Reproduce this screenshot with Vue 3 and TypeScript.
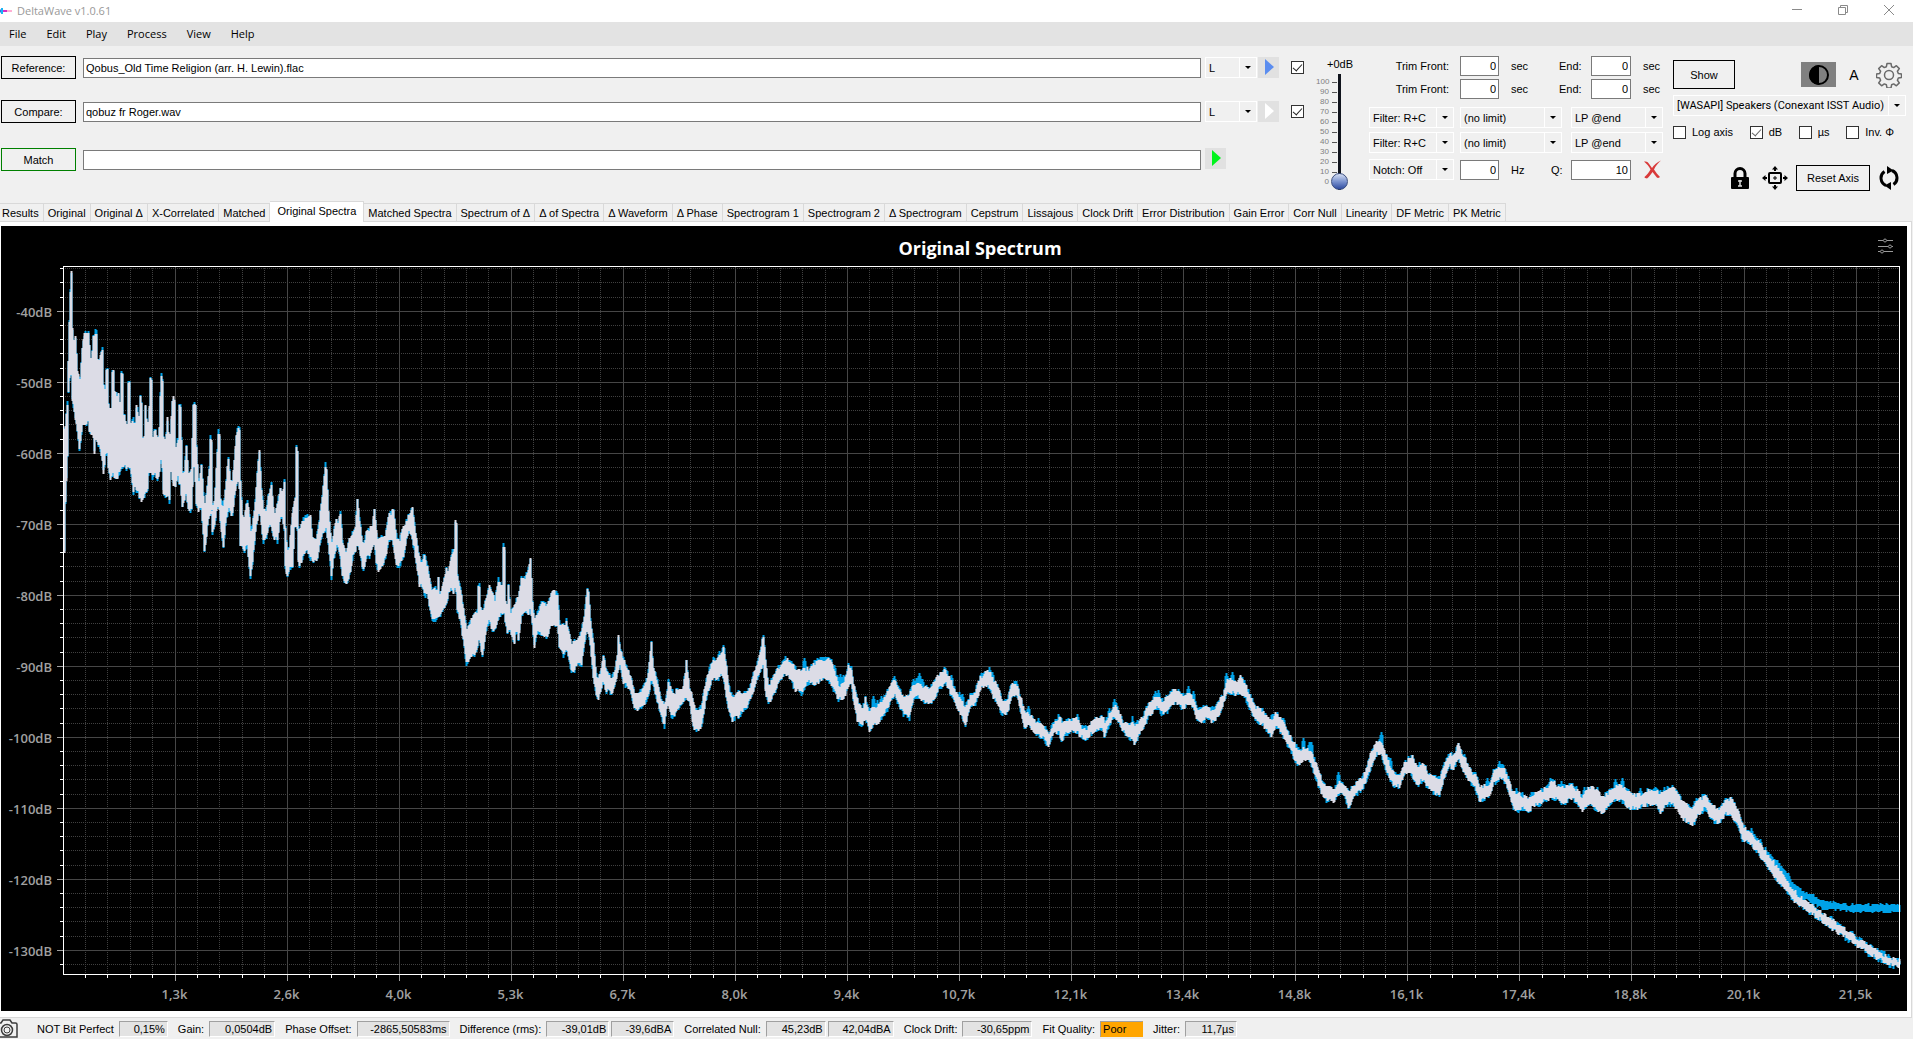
<script setup lang="ts">
import { ref } from 'vue'

const menus = ['File', 'Edit', 'Play', 'Process', 'View', 'Help']

const tabs = [
  'Results', 'Original', 'Original Δ', 'X-Correlated', 'Matched', 'Original Spectra',
  'Matched Spectra', 'Spectrum of Δ', 'Δ of Spectra', 'Δ Waveform', 'Δ Phase',
  'Spectrogram 1', 'Spectrogram 2', 'Δ Spectrogram', 'Cepstrum', 'Lissajous',
  'Clock Drift', 'Error Distribution', 'Gain Error', 'Corr Null', 'Linearity',
  'DF Metric', 'PK Metric',
]
const activeTab = ref('Original Spectra')

const volume = ref(0)
const volumeMarks = [100, 90, 80, 70, 60, 50, 40, 30, 20, 10, 0]

interface Reading {
  label: string
  values: { text: string; width: number; warn?: boolean }[]
}
const readings: Reading[] = [
  { label: 'NOT Bit Perfect', values: [{ text: '0,15%', width: 49 }] },
  { label: 'Gain:', values: [{ text: '0,0504dB', width: 66 }] },
  { label: 'Phase Offset:', values: [{ text: '-2865,50583ms', width: 93 }] },
  { label: 'Difference (rms):', values: [{ text: '-39,01dB', width: 63 }, { text: '-39,6dBA', width: 63 }] },
  { label: 'Correlated Null:', values: [{ text: '45,23dB', width: 60 }, { text: '42,04dBA', width: 66 }] },
  { label: 'Clock Drift:', values: [{ text: '-30,65ppm', width: 70 }] },
  { label: 'Fit Quality:', values: [{ text: 'Poor', width: 43, warn: true }] },
  { label: 'Jitter:', values: [{ text: '11,7µs', width: 52 }] },
]

/* ---- chart geometry ---- */
const plot = { left: 63, top: 266, right: 1899, bottom: 974 }
const xLabels = [
  '1,3k', '2,6k', '4,0k', '5,3k', '6,7k', '8,0k', '9,4k', '10,7k',
  '12,1k', '13,4k', '14,8k', '16,1k', '17,4k', '18,8k', '20,1k', '21,5k',
]
const X_STEP = 112.07
const Y_STEP = 71
const xAt = (i: number) => Math.floor(plot.left + X_STEP * i) + 0.5
const yAt = (i: number) => Math.floor(311.2 + Y_STEP * i) + 0.5

const xMajor = xLabels.map((text, i) => ({ text, x: xAt(i + 1) }))
const yMajor = Array.from({ length: 10 }, (_, i) => ({ text: `-${40 + i * 10}dB`, y: yAt(i) }))
const xMinor: number[] = []
for (let i = 1; i < 82; i++) if (i % 5) xMinor.push(xAt(i / 5))
const yMinor: number[] = []
for (let i = -3; i < 47; i++) if (((i % 5) + 5) % 5) yMinor.push(yAt(i / 5))

/* Spectrum envelope: position, upper edge, lower edge */
const envelope = [
  64,430,552, 65,428,503, 67,405,455, 68,360,392, 69,323,380, 70,290,372, 71,273,375, 72,330,400,
  73,345,405, 75,337,418, 77,372,431, 79,380,451, 80,378,442, 82,347,421, 84,334,424, 86,333,425,
  88,333,415, 89,347,432, 91,365,434, 93,336,436, 94,402,452, 95,332,438, 96,332,438, 98,385,447,
  99,362,442, 101,352,455, 102,350,460, 103,385,472, 105,392,455, 106,369,453, 107,369,452,
  108,405,466, 110,416,480, 111,410,477, 112,370,475, 113,372,475, 114,393,476, 116,396,480,
  118,395,473, 120,408,470, 121,371,468, 122,372,467, 123,435,466, 124,413,462, 126,428,469,
  127,425,468, 128,381,466, 129,382,466, 130,425,466, 133,421,494, 134,440,480, 136,407,490,
  137,410,490, 138,438,491, 140,397,500, 141,402,500, 142,440,499, 144,438,495, 145,407,493,
  147,435,488, 149,408,458, 150,378,471, 151,382,473, 152,440,476, 155,428,472, 157,445,480,
  159,428,470, 160,395,462, 161,374,455, 162,380,470, 163,435,492, 165,446,497, 167,419,492,
  169,448,502, 170,436,468, 172,400,480, 173,398,485, 174,402,485, 175,455,485, 177,441,475,
  178,440,478, 179,403,483, 180,405,484, 182,475,505, 184,472,498, 186,445,492, 188,476,511,
  191,471,508, 193,406,462, 194,403,468, 195,405,480, 196,446,504, 198,482,510, 200,475,507,
  201,464,505, 204,510,551, 207,488,527, 209,467,514, 210,439,512, 211,441,512, 212,510,533,
  214,502,527, 216,470,510, 218,433,505, 219,436,508, 220,500,523, 223,508,548, 225,490,525,
  228,458,507, 230,482,512, 232,484,515, 234,460,495, 236,436,484, 238,426,478, 239,428,490,
  240,480,545, 242,516,546, 244,518,550, 247,501,545, 249,515,568, 250,530,577, 252,527,562,
  255,503,532, 257,472,521, 259,452,505, 261,488,523, 263,510,540, 266,511,537, 268,497,525,
  271,484,528, 274,520,538, 277,505,540, 280,488,515, 282,498,518, 284,481,530, 285,528,568,
  287,552,578, 289,548,568, 292,515,568, 294,502,528, 295,500,525, 296,448,525, 297,449,530,
  298,528,562, 299,535,568, 302,520,557, 306,518,548, 310,516,558, 312,538,560, 316,541,562,
  318,528,552, 322,497,532, 325,466,528, 326,470,530, 328,512,545, 330,535,563, 331,545,577,
  333,535,558, 336,520,545, 338,525,548, 340,512,558, 342,541,575, 346,555,585, 349,540,575,
  353,532,552, 355,528,552, 357,500,538, 360,528,555, 363,548,570, 366,533,556, 369,529,556,
  372,527,547, 374,509,543, 376,532,562, 378,542,570, 381,537,565, 385,538,558, 388,517,541,
  391,513,538, 393,510,545, 396,537,563, 399,543,565, 403,527,555, 406,522,538, 409,515,530,
  412,507,540, 414,525,548, 417,545,570, 419,558,585, 422,562,585, 424,555,595, 427,568,592,
  430,585,612, 432,592,620, 434,588,618, 437,592,618, 438,578,618, 439,592,616, 441,592,612,
  446,570,605, 448,572,590, 452,553,588, 453,552,594, 454,550,590, 455,522,585, 456,524,590,
  457,575,610, 460,588,620, 463,610,640, 466,630,664, 470,622,655, 474,615,655, 477,612,645,
  478,584,640, 479,586,638, 480,606,645, 482,615,657, 485,602,633, 489,587,618, 492,595,631,
  495,600,630, 498,580,617, 502,590,613, 503,547,610, 504,549,612, 505,602,624, 507,610,632,
  508,585,626, 510,612,632, 514,607,645, 516,600,623, 518,598,640, 521,578,613, 525,578,610,
  528,570,613, 530,560,610, 532,600,623, 534,623,646, 537,613,630, 542,603,634, 547,606,635,
  550,597,626, 553,592,623, 557,594,624, 559,623,647, 563,627,655, 566,622,646, 569,633,660,
  571,646,670, 574,640,670, 577,643,663, 581,633,663, 584,618,643, 587,588,627, 588,594,632,
  590,620,646, 593,643,676, 596,676,695, 598,680,698, 601,670,686, 603,656,680, 606,671,692,
  608,673,687, 611,680,696, 615,670,683, 617,655,672, 618,635,668, 620,650,666, 623,660,683,
  628,672,687, 631,680,693, 634,693,708, 638,695,710, 642,689,706, 647,680,697, 649,663,691,
  651,644,675, 653,667,685, 657,682,701, 660,697,713, 664,707,726, 666,697,707, 668,682,702,
  671,690,716, 674,696,715, 677,689,707, 680,693,706, 683,688,700, 685,672,698, 686,660,696,
  687,672,698, 689,688,700, 692,697,720, 694,707,728, 698,712,730, 701,707,726, 704,690,707,
  707,677,693, 711,663,680, 713,659,676, 716,662,678, 719,655,676, 721,653,673, 723,648,677,
  726,667,697, 728,687,710, 732,697,720, 735,697,715, 738,692,717, 742,695,710, 746,693,707,
  749,690,700, 753,675,690, 757,663,677, 760,653,670, 763,636,663, 765,660,690, 768,687,703,
  772,680,697, 776,670,687, 780,667,678, 785,659,673, 790,662,677, 795,668,690, 798,670,687,
  801,673,693, 804,668,687, 808,670,680, 812,666,683, 816,661,684, 820,661,680, 824,660,676,
  829,659,680, 833,667,688, 838,686,699, 843,685,699, 848,667,685, 851,668,682, 853,684,697,
  857,700,721, 862,710,725, 865,699,716, 869,713,730, 873,706,724, 878,706,722, 882,700,716,
  887,693,708, 891,685,698, 894,678,693, 898,687,703, 903,699,713, 909,695,717, 913,685,697,
  917,684,695, 919,685,697, 925,688,702, 930,690,702, 934,682,698, 938,675,688, 945,670,683,
  950,680,692, 955,692,702, 960,700,713, 965,709,723, 970,695,705, 975,692,703, 980,677,688,
  985,673,684, 989,672,687, 993,680,697, 997,686,703, 1002,702,713, 1007,702,712, 1011,685,697,
  1016,684,694, 1020,697,708, 1024,712,727, 1028,712,723, 1033,720,730, 1038,725,735,
  1043,727,737, 1048,735,745, 1053,723,733, 1059,717,731, 1061,722,741, 1065,724,733,
  1072,719,730, 1077,720,731, 1080,727,736, 1086,729,739, 1092,722,732, 1097,718,728,
  1103,716,730, 1104,723,736, 1109,715,724, 1114,706,715, 1119,713,722, 1123,723,731,
  1128,726,736, 1132,720,738, 1134,726,743, 1138,722,736, 1142,718,730, 1147,707,718,
  1152,700,712, 1157,697,706, 1162,702,713, 1167,698,712, 1172,690,702, 1178,691,703,
  1183,697,708, 1188,693,702, 1193,698,706, 1197,709,720, 1200,711,722, 1205,706,718,
  1210,709,721, 1215,707,719, 1219,701,713, 1223,694,703, 1226,682,693, 1232,680,692,
  1236,683,694, 1240,677,693, 1245,685,696, 1249,695,707, 1255,707,719, 1262,711,724,
  1268,718,731, 1271,719,736, 1275,714,725, 1282,720,733, 1287,730,743, 1292,742,753,
  1297,748,764, 1300,752,762, 1303,748,759, 1309,750,760, 1313,758,770, 1318,770,784,
  1323,785,797, 1328,788,800, 1333,790,801, 1338,783,792, 1343,784,793, 1348,793,807,
  1353,786,796, 1360,780,790, 1365,773,783, 1370,754,768, 1376,743,753, 1381,742,752,
  1383,750,762, 1388,762,775, 1393,773,784, 1399,777,787, 1404,764,774, 1408,760,770,
  1412,757,776, 1417,770,784, 1423,763,778, 1428,775,788, 1433,777,792, 1439,780,794,
  1443,767,779, 1449,755,765, 1453,757,768, 1458,744,758, 1462,755,768, 1467,764,777,
  1472,774,784, 1475,772,787, 1479,788,801, 1485,786,796, 1489,785,796, 1493,772,783,
  1499,768,778, 1503,767,780, 1508,780,790, 1512,792,805, 1516,793,810, 1522,796,807,
  1528,799,811, 1533,795,805, 1542,790,802, 1547,788,799, 1551,780,796, 1557,787,799,
  1562,788,804, 1570,785,797, 1577,790,802, 1582,797,810, 1589,788,803, 1597,790,810,
  1602,799,814, 1607,794,806, 1615,787,799, 1622,786,800, 1628,793,808, 1635,795,808,
  1642,795,806, 1648,791,804, 1655,790,803, 1660,793,813, 1665,790,803, 1672,787,803,
  1678,795,810, 1683,803,819, 1692,809,824, 1697,799,815, 1705,797,807, 1710,805,818,
  1718,810,822, 1725,801,814, 1731,799,815, 1737,810,823, 1742,825,839, 1747,832,842,
  1752,834,846, 1760,845,856, 1768,856,867, 1777,868,880, 1785,879,888, 1793,891,900,
  1803,900,907, 1813,907,914, 1827,917,925, 1840,927,934, 1855,937,944, 1867,945,952,
  1880,953,960, 1892,959,965, 1899,960,966,
]

/* Places where the reference signal rises above the compared one: centre, upper edge */
const peaks: Record<number, number> = {
  339: 518, 719: 651, 723: 645, 738: 690, 768: 684, 773: 676, 795: 667, 804: 658, 834: 665,
  837: 675, 840: 674, 843: 675, 846: 674, 873: 696, 877: 700, 881: 696, 885: 696, 913: 679,
  916: 678, 919: 673, 922: 679, 951: 675, 959: 692, 962: 694, 989: 667, 992: 672, 1016: 681,
  1028: 706, 1038: 718, 1058: 716, 1077: 714, 1109: 708, 1114: 699, 1116: 703, 1155: 691,
  1158: 690, 1188: 686, 1193: 691, 1226: 673, 1228: 678, 1232: 672, 1303: 738, 1309: 742,
  1311: 742, 1338: 772, 1381: 732, 1388: 757, 1390: 758, 1419: 762, 1451: 752, 1464: 754,
  1487: 778, 1499: 761, 1505: 769, 1516: 788, 1531: 792, 1535: 792, 1542: 789, 1561: 781,
  1569: 783, 1572: 783, 1584: 787, 1615: 779, 1622: 778, 1640: 788, 1650: 789, 1655: 787,
  1664: 787, 1672: 786, 1706: 795, 1725: 798, 1731: 797, 1751: 828, 1760: 839, 1768: 852,
  1777: 860, 1788: 873,
}

/* Noise floor the reference settles on above 20 kHz */
const floorTail = [
  1768,854,862, 1777,862,872, 1785,873,882, 1793,885,892, 1800,889,896, 1803,892,898,
  1813,896,903, 1822,902,908, 1837,904,909, 1855,906,911, 1870,905,911, 1899,905,911,
]

function noise(seed: number) {
  let s = seed
  return () => {
    s = (s * 1664525 + 1013904223) >>> 0
    return s / 4294967296
  }
}

function columns(data: number[], jitter: number, grow: number, seed: number, raised: Record<number, number> = {}) {
  const rand = noise(seed)
  let d = ''
  let k = 0
  const last = data[data.length - 3]
  for (let x = data[0]; x <= last; x++) {
    while (k < data.length - 6 && x >= data[k + 3]) k += 3
    const t = Math.min(1, (x - data[k]) / (data[k + 3] - data[k]))
    let hi = data[k + 1] + (data[k + 4] - data[k + 1]) * t
    let lo = data[k + 2] + (data[k + 5] - data[k + 2]) * t
    hi += (rand() - 0.5) * jitter - grow * rand()
    lo += (rand() - 0.5) * jitter + grow * rand()
    const near = Math.min(raised[x] ?? 9999, (raised[x - 1] ?? 9999) + 3, (raised[x + 1] ?? 9999) + 3)
    if (near < hi) hi = near
    d += `M${x + 0.5} ${Math.round(hi)}V${Math.round(lo)}`
  }
  return d
}

const comparedPath = columns(envelope, 5, 0, 7)
const referencePath = columns(envelope, 5, 2, 21, peaks) + columns(floorTail, 3, 1, 5)
</script>

<template>
  <div class="app">
    <header class="titlebar">
      <svg class="logo" viewBox="0 0 12 12" width="12" height="12" aria-hidden="true">
        <path d="M0 6h2" stroke="#2b6fe0" stroke-width="3" />
        <path d="M2 3v6" stroke="#19b5f5" stroke-width="2" />
        <path d="M3 6h4" stroke="#d52fc4" stroke-width="2" />
        <path d="M7 6h5" stroke="#ff5fa8" stroke-width="1" />
      </svg>
      <span class="title">DeltaWave v1.0.61</span>
      <div class="window-buttons">
        <button type="button" aria-label="Minimize">
          <svg viewBox="0 0 12 12" width="12" height="12"><path d="M1 5.500h10" /></svg>
        </button>
        <button type="button" aria-label="Restore">
          <svg viewBox="0 0 12 12" width="12" height="12"><path d="M1.500 3.500h7v7h-7zM3.500 3.500v-2h7v7h-2" /></svg>
        </button>
        <button type="button" aria-label="Close">
          <svg viewBox="0 0 12 12" width="12" height="12"><path d="M1 1l10 10M11 1L1 11" /></svg>
        </button>
      </div>
    </header>

    <nav class="menubar">
      <button v-for="m in menus" :key="m" type="button">{{ m }}</button>
    </nav>

    <section class="controls">
      <div class="files">
        <div class="file-row">
          <button type="button" class="btn file-btn">Reference:</button>
          <input class="box path" type="text" value="Qobus_Old Time Religion (arr. H. Lewin).flac" aria-label="Reference file" />
          <span class="combo channel"><select aria-label="Reference channel"><option>L</option></select></span>
          <button type="button" class="play" aria-label="Play reference">
            <svg viewBox="0 0 21 21" width="21" height="21"><path d="M7 2v16l9-8z" fill="#5b8def" /></svg>
          </button>
          <input class="tick" type="checkbox" checked aria-label="Use reference" />
        </div>
        <div class="file-row">
          <button type="button" class="btn file-btn">Compare:</button>
          <input class="box path" type="text" value="qobuz fr Roger.wav" aria-label="Compare file" />
          <span class="combo channel"><select aria-label="Compare channel"><option>L</option></select></span>
          <button type="button" class="play" aria-label="Play compare">
            <svg viewBox="0 0 21 21" width="21" height="21"><path d="M7 2v16l9-8z" fill="#fff" /></svg>
          </button>
          <input class="tick" type="checkbox" checked aria-label="Use compare" />
        </div>
        <div class="file-row">
          <button type="button" class="btn file-btn match">Match</button>
          <input class="box path" type="text" value="" aria-label="Match result" />
          <div class="match-play">
            <button type="button" class="play" aria-label="Play match">
              <svg viewBox="0 0 21 21" width="21" height="21"><path d="M7 2v16l9-8z" fill="#00f41c" /></svg>
            </button>
          </div>
        </div>
      </div>

      <div class="volume">
        <label for="vol">+0dB</label>
        <div class="fader">
          <ol class="marks">
            <li v-for="m in volumeMarks" :key="m">{{ m }}</li>
          </ol>
          <div class="notches" aria-hidden="true"><i v-for="m in volumeMarks" :key="m"></i></div>
          <input id="vol" v-model.number="volume" type="range" min="0" max="100" />
        </div>
      </div>

      <div class="filters">
        <div v-for="n in 2" :key="'t' + n" class="trim-row">
          <label class="trim-label" :for="'front' + n">Trim Front:</label>
          <input :id="'front' + n" class="box num" type="text" value="0" />
          <span class="unit">sec</span>
          <label class="end-label" :for="'end' + n">End:</label>
          <input :id="'end' + n" class="box num" type="text" value="0" />
          <span>sec</span>
        </div>
        <div v-for="n in 2" :key="'f' + n" class="filter-row">
          <span class="combo kind"><select :aria-label="'Filter ' + n"><option>Filter: R+C</option></select></span>
          <span class="combo limit"><select :aria-label="'Limit ' + n"><option>(no limit)</option></select></span>
          <span class="combo pass"><select :aria-label="'Low pass ' + n"><option>LP @end</option></select></span>
        </div>
        <div class="notch-row">
          <span class="combo kind"><select aria-label="Notch"><option>Notch: Off</option></select></span>
          <input class="box num" type="text" value="0" aria-label="Notch frequency" />
          <span class="hz">Hz</span>
          <label class="q-label" for="q">Q:</label>
          <input id="q" class="box q" type="text" value="10" />
          <button type="button" class="bare clear" aria-label="Clear filters">
            <svg viewBox="0 0 19 19" width="19" height="19">
              <path d="M1 1.500C4 1 5 2 6.500 4.500L9 8c2-3 5-6 9-7.500C15 3 12.500 6 11 9.500c2 3 4 5.500 6 7.500-2 1.500-3 1-4-.5L9.500 12C8 14 6 17 4 18.500 3 18.500 1 17.500 1.500 17 4 15 6 12 7.500 9.500 6 6.500 4 4 1 1.500z" fill="#d93a3a" />
            </svg>
          </button>
        </div>
      </div>

      <div class="output">
        <div class="show-row">
          <button type="button" class="btn show">Show</button>
          <button type="button" class="contrast" aria-label="Contrast">
            <svg viewBox="0 0 22 22" width="22" height="22">
              <circle cx="11" cy="11" r="9" fill="none" stroke="#000" stroke-width="2" />
              <path d="M11 1a10 10 0 0 0 0 20z" />
            </svg>
          </button>
          <button type="button" class="bare letter">A</button>
          <button type="button" class="bare gear" aria-label="Settings">
            <svg viewBox="0 0 26 26" width="26" height="26" fill="none" stroke="#6a6a6a" stroke-width="1.500" stroke-linejoin="round">
              <circle cx="13" cy="13" r="4.500" />
              <path d="M11 1.500h4l.6 3.200 2.100.9 2.700-1.900 2.900 2.900-1.900 2.700.9 2.100 3.200.6v3.500l-3.200.6-.9 2.100 1.900 2.700-2.900 2.900-2.700-1.900-2.100.9-.6 3.200h-4l-.6-3.200-2.100-.9-2.700 1.900-2.900-2.900 1.900-2.700-.9-2.100-3.200-.6V12l3.200-.6.9-2.100-1.900-2.700 2.900-2.900 2.700 1.900 2.100-.9z" />
            </svg>
          </button>
        </div>
        <span class="combo device"><select aria-label="Output device"><option>[WASAPI] Speakers (Conexant ISST Audio)</option></select></span>
        <div class="options">
          <label><input class="tick" type="checkbox" />Log axis</label>
          <label><input class="tick soft" type="checkbox" checked />dB</label>
          <label><input class="tick" type="checkbox" />µs</label>
          <label><input class="tick" type="checkbox" />Inv. Φ</label>
        </div>
        <div class="axis-row">
          <button type="button" class="bare" aria-label="Lock axis">
            <svg viewBox="0 0 18 22" width="18" height="22">
              <path d="M4 11V6.500a5 5 0 0 1 10 0V11" fill="none" stroke="#000" stroke-width="3" />
              <rect x="0" y="10" width="18" height="12" rx="1" />
              <path d="M9 13v6M7 14h4M7 19h4" stroke="#ddd" stroke-width="1.500" />
            </svg>
          </button>
          <button type="button" class="bare" aria-label="Fit view">
            <svg viewBox="0 0 26 24" width="26" height="24">
              <rect x="7" y="7" width="12" height="10" rx="1" fill="none" stroke="#000" stroke-width="2" />
              <path d="M13 0l3 3.500h-2V5h-2V3.500h-2zM13 24l3-3.500h-2V19h-2v1.500h-2zM0 12l3.500-3v2H5v2H3.500v2zM26 12l-3.500-3v2H21v2h1.500v2z" />
              <path d="M13 10v4M11 12h4" stroke="#000" />
            </svg>
          </button>
          <button type="button" class="btn reset">Reset Axis</button>
          <button type="button" class="bare" aria-label="Refresh">
            <svg viewBox="0 0 20 24" width="20" height="24">
              <path d="M7 19.500A8 8 0 0 1 5.500 5.500M13 4.500a8 8 0 0 1 1.500 14" fill="none" stroke="#000" stroke-width="3" />
              <path d="M8 0v8L14.500 4.500zM12 24v-8l-6.500 3.500z" />
            </svg>
          </button>
        </div>
      </div>
    </section>

    <div class="tabs" role="tablist">
      <button
        v-for="t in tabs" :key="t" type="button" role="tab"
        :aria-selected="t === activeTab" :class="{ active: t === activeTab }" @click="activeTab = t"
      >{{ t }}</button>
    </div>

    <main class="page">
      <svg class="chart" viewBox="1 226 1906 785" role="img" aria-label="Original Spectrum">
        <rect x="1" y="226" width="1906" height="785" fill="#000" />
        <text class="chart-title" x="980" y="255" text-anchor="middle">Original Spectrum</text>
        <g class="tune">
          <path d="M1878 240.500h5M1887 240.500h6M1878 246.500h10M1892 246.500h1M1878 251.500h2M1884 251.500h9" />
          <circle cx="1885" cy="240.500" r="1.500" /><circle cx="1890" cy="246.500" r="1.500" /><circle cx="1882" cy="251.500" r="1.500" />
        </g>
        <g class="minor">
          <line v-for="x in xMinor" :key="'a' + x" :x1="x" :x2="x" :y1="plot.top" :y2="plot.bottom" />
          <line v-for="y in yMinor" :key="'b' + y" :x1="plot.left" :x2="plot.right" :y1="y" :y2="y" />
        </g>
        <g class="major">
          <line v-for="m in xMajor" :key="m.text" :x1="m.x" :x2="m.x" :y1="plot.top" :y2="plot.bottom" />
          <line v-for="m in yMajor" :key="m.text" :x1="plot.left" :x2="plot.right" :y1="m.y" :y2="m.y" />
        </g>
        <path :d="referencePath" stroke="#00a2e8" stroke-width="2" />
        <path :d="comparedPath" stroke="#dcdce6" stroke-width="2" />
        <rect class="frame" :x="plot.left + 0.5" :y="plot.top + 0.5" :width="plot.right - plot.left" :height="plot.bottom - plot.top" />
        <g class="ticks">
          <line v-for="x in xMinor" :key="'c' + x" :x1="x" :x2="x" :y1="plot.bottom" :y2="plot.bottom + 4" />
          <line v-for="y in yMinor" :key="'d' + y" :x1="plot.left - 3" :x2="plot.left" :y1="y" :y2="y" />
        </g>
        <g class="major-ticks">
          <line v-for="m in xMajor" :key="m.text" :x1="m.x" :x2="m.x" :y1="plot.bottom + 1" :y2="plot.bottom + 7" />
          <line v-for="m in yMajor" :key="m.text" :x1="plot.left - 6" :x2="plot.left" :y1="m.y" :y2="m.y" />
        </g>
        <g class="labels">
          <text v-for="m in xMajor" :key="m.text" :x="m.x - 1" y="999" text-anchor="middle">{{ m.text }}</text>
          <text v-for="m in yMajor" :key="m.text" x="52" :y="m.y + 5" text-anchor="end">{{ m.text }}</text>
        </g>
      </svg>
    </main>

    <footer class="status">
      <button type="button" class="bare camera" aria-label="Screenshot">
        <svg viewBox="0 0 18 20" width="18" height="20" fill="none" stroke="#3c3c3c" stroke-width="1.500">
          <path d="M-3 4h4l2-3h7l2 3h3.500a1.500 1.500 0 0 1 1.500 1.500V18H-3" />
          <circle cx="7" cy="11" r="5.500" /><circle cx="7" cy="11" r="3" stroke-width="1" />
        </svg>
      </button>
      <div v-for="r in readings" :key="r.label" class="reading">
        <span>{{ r.label }}</span>
        <output v-for="v in r.values" :key="v.text" :class="{ warn: v.warn }" :style="{ width: v.width + 'px' }">{{ v.text }}</output>
      </div>
    </footer>
  </div>
</template>

<style>
body {
  background: #f0f0f0;
}
</style>

<style scoped>
.app {
  font: 11px/14px "Liberation Sans", Arial, sans-serif;
  color: #000;
  background: #f0f0f0;
}
.app *,
.app *::before,
.app *::after {
  box-sizing: border-box;
}
button,
input,
select {
  font: inherit;
  color: inherit;
  margin: 0;
}
button {
  padding: 0;
  border: 0;
  background: none;
}
svg {
  display: block;
}

.titlebar {
  display: flex;
  align-items: center;
  height: 22px;
  background: #fff;
  color: #999;
  font-family: "Open Sans", sans-serif;
}
.title {
  margin-left: 5px;
  flex: 1;
}
.window-buttons {
  display: flex;
  gap: 34px;
  margin: -3px 18px 0 0;
}
.window-buttons svg {
  fill: none;
  stroke: #8a8a8a;
}

.menubar {
  display: flex;
  gap: 20px;
  height: 24px;
  padding-left: 9px;
  background: #e3e3e3;
  font-family: "Open Sans", sans-serif;
}

.controls {
  display: flex;
  align-items: flex-start;
  height: 155px;
  padding: 10px 7px 0 1px;
}
.btn {
  border: 1px solid #000;
  text-align: center;
}
.box {
  height: 20px;
  border: 1px solid #7a7a7a;
  border-radius: 0;
  padding: 0 2px;
  background: #fff;
}
.bare {
  display: block;
}

.files {
  flex: 1;
  min-width: 0;
}
.file-row {
  display: flex;
  align-items: center;
  height: 23px;
  margin-bottom: 21px;
}
.file-row + .file-row {
  margin-bottom: 25px;
}
.file-btn {
  width: 75px;
  height: 23px;
  margin-right: 7px;
}
.match {
  border-color: #008000;
}
.path {
  flex: 1;
  min-width: 0;
  margin-right: 4px;
}
.channel {
  width: 52px;
  margin-right: 1px;
}
.play {
  width: 21px;
  height: 21px;
  background: #e1e1e1;
}
.match-play {
  width: 99px;
}
.file-row .tick {
  margin-left: 12px;
}

.combo {
  position: relative;
  display: block;
  height: 21px;
}
.combo select {
  width: 100%;
  height: 100%;
  appearance: none;
  border: 1px solid #fff;
  border-radius: 0;
  background: #f0f0f0;
  padding: 0 17px 0 3px;
}
.device {
  font-family: Roboto, sans-serif;
}
.combo::before {
  content: "";
  position: absolute;
  top: 0;
  bottom: 0;
  right: 17px;
  width: 1px;
  background: #fff;
}
.combo::after {
  content: "";
  position: absolute;
  top: 9px;
  right: 6px;
  border: 3px solid transparent;
  border-top-color: #000;
  border-bottom: 0;
}

.tick {
  appearance: none;
  position: relative;
  flex: none;
  width: 13px;
  height: 13px;
  border: 1px solid #333;
  background: #fff;
}
.tick:checked::after {
  content: "";
  position: absolute;
  left: 3px;
  top: 0;
  width: 5px;
  height: 9px;
  border: solid #222;
  border-width: 0 1px 1px 0;
  transform: rotate(42deg);
}
.tick.soft:checked::after {
  border-color: #666;
}

.volume {
  width: 42px;
  margin-left: 12px;
  text-align: right;
}
.volume label {
  display: block;
  margin: 1px 5px 3px 0;
}
.fader {
  display: flex;
  height: 118px;
}
.marks {
  width: 13px;
  margin: 3px 3px 0 0;
  padding: 0;
  list-style: none;
  font-size: 8px;
  line-height: 10px;
  color: #808080;
}
.notches {
  display: flex;
  flex-direction: column;
  gap: 9px;
  padding-top: 8px;
  width: 5px;
}
.notches i {
  height: 1px;
  background: #555;
}
#vol {
  appearance: none;
  writing-mode: vertical-lr;
  direction: rtl;
  width: 17px;
  height: 116px;
  margin-left: -6px;
  background: transparent;
}
#vol::-webkit-slider-runnable-track {
  width: 3px;
  background: #10131c;
}
#vol::-webkit-slider-thumb {
  appearance: none;
  width: 17px;
  height: 17px;
  margin-left: -7px;
  border: 1px solid #3c4f80;
  border-radius: 50%;
  background: linear-gradient(#d5def2, #7b93cf 50%, #2f4ca0);
}

.filters {
  width: 294px;
  margin-left: 11px;
}
.trim-row {
  display: flex;
  align-items: center;
  height: 20px;
  margin-bottom: 3px;
}
.trim-label {
  width: 80px;
  margin-right: 11px;
  text-align: right;
}
.num {
  width: 39px;
  text-align: right;
}
.unit {
  width: 48px;
  margin-left: 12px;
}
.end-label {
  width: 32px;
}
.end-label + .num {
  width: 40px;
  margin-right: 12px;
}
.filter-row {
  display: flex;
  margin-top: 4px;
}
.trim-row + .filter-row {
  margin-top: 8px;
}
.kind {
  width: 85px;
  margin-right: 6px;
}
.limit {
  width: 102px;
  margin-right: 9px;
}
.pass {
  width: 92px;
}
.notch-row {
  display: flex;
  align-items: center;
  margin-top: 6px;
}
.hz {
  width: 40px;
  margin-left: 12px;
}
.q-label {
  width: 20px;
}
.q {
  width: 60px;
  margin-right: 12px;
  text-align: right;
}

.output {
  width: 233px;
  margin-left: 10px;
  padding-top: 4px;
}
.show-row {
  display: flex;
  align-items: center;
  margin-bottom: 6px;
}
.show {
  width: 62px;
  height: 29px;
  margin-right: 66px;
}
.contrast {
  display: flex;
  align-items: center;
  justify-content: center;
  width: 35px;
  height: 25px;
  background: #808080;
}
.letter {
  width: 36px;
  font-size: 14px;
}
.gear {
  margin-left: 4px;
}
.options {
  display: flex;
  justify-content: space-between;
  margin: 9px 12px 26px 0;
}
.options label {
  display: flex;
  align-items: center;
  gap: 6px;
}
.axis-row {
  display: flex;
  align-items: center;
  justify-content: flex-end;
  padding-right: 7px;
}
.axis-row .bare {
  margin-right: 13px;
}
.axis-row .bare + .bare {
  margin-right: 8px;
}
.axis-row .reset {
  width: 74px;
  height: 26px;
  margin-right: 9px;
}
.axis-row .reset + .bare {
  margin-right: 0;
}

.tabs {
  display: flex;
  align-items: flex-end;
  height: 21px;
}
.tabs button {
  height: 19px;
  padding: 0 4px;
  border: 1px solid #d9d9d9;
  border-width: 1px 1px 0 0;
  white-space: nowrap;
}
.tabs button:first-child {
  padding-left: 2px;
}
.tabs .active {
  height: 21px;
  padding: 0 7px 3px;
  background: #fff;
}
.page {
  margin-right: 1px;
  padding: 4px 4px 6px 1px;
  border: 1px solid #d9d9d9;
  border-left: 0;
  background: #fff;
}
.tabs + .page {
  margin-top: -1px;
}
.chart {
  width: 100%;
  height: auto;
}
.chart-title {
  font: 700 18px "Open Sans", sans-serif;
  fill: #fff;
}
.tune {
  fill: none;
  stroke: #9a9a9a;
}
.minor {
  stroke: #404040;
  stroke-dasharray: 1 1;
}
.major {
  stroke: #464646;
}
.frame {
  fill: none;
  stroke: #fff;
}
.ticks {
  stroke: #fff;
}
.major-ticks {
  stroke: #a0a0a0;
}
.labels {
  font: 600 13px "Open Sans", sans-serif;
  fill: #a0a0a0;
}

.status {
  display: flex;
  align-items: center;
  height: 21px;
}
.camera {
  margin-right: 19px;
}
.reading {
  display: flex;
  align-items: center;
  gap: 2px;
  margin-right: 10px;
}
.reading span {
  margin-right: 3px;
}
.reading output {
  height: 16px;
  padding: 0 2px;
  border: 1px solid #a0a0a0;
  border-right-color: #fff;
  border-bottom-color: #fff;
  background: #e3e3e3;
  text-align: right;
}
.reading .warn {
  border-right-color: #ffa500;
  border-bottom-color: #ffa500;
  background: #ffa500;
  text-align: left;
}
</style>
